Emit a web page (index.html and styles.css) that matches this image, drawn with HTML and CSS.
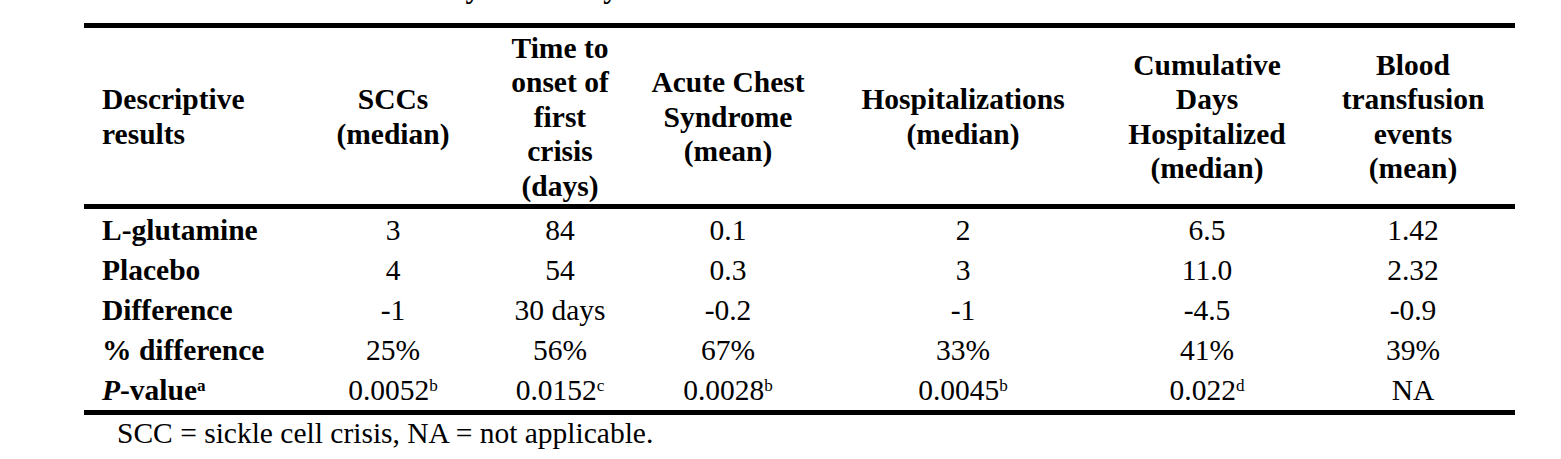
FILE: index.html
```html
<!DOCTYPE html>
<html lang="en">
<head>
<meta charset="utf-8">
<title>Efficacy results</title>
<link rel="stylesheet" href="styles.css">
</head>
<body>
<div class="title">Table 1. Clinical Efficacy Results by Treatment</div>
<table class="results">
  <colgroup>
    <col class="c1"><col class="c2"><col class="c3"><col class="c4"><col class="c5"><col class="c6"><col class="c7">
  </colgroup>
  <thead>
    <tr>
      <th class="label">Descriptive<br>results</th>
      <th>SCCs<br>(median)</th>
      <th class="tall">Time to<br>onset of<br>first<br>crisis<br>(days)</th>
      <th>Acute Chest<br>Syndrome<br>(mean)</th>
      <th>Hospitalizations<br>(median)</th>
      <th>Cumulative<br>Days<br>Hospitalized<br>(median)</th>
      <th class="last">Blood<br>transfusion<br>events<br>(mean)</th>
    </tr>
  </thead>
  <tbody>
    <tr class="first">
      <th class="label">L-glutamine</th>
      <td>3</td><td>84</td><td>0.1</td><td>2</td><td>6.5</td><td class="last">1.42</td>
    </tr>
    <tr>
      <th class="label">Placebo</th>
      <td>4</td><td>54</td><td>0.3</td><td>3</td><td>11.0</td><td class="last">2.32</td>
    </tr>
    <tr>
      <th class="label">Difference</th>
      <td>-1</td><td>30 days</td><td>-0.2</td><td>-1</td><td>-4.5</td><td class="last">-0.9</td>
    </tr>
    <tr>
      <th class="label">% difference</th>
      <td>25%</td><td>56%</td><td>67%</td><td>33%</td><td>41%</td><td class="last">39%</td>
    </tr>
    <tr class="end">
      <th class="label"><i>P</i>-value<sup>a</sup></th>
      <td>0.0052<sup>b</sup></td><td>0.0152<sup>c</sup></td><td>0.0028<sup>b</sup></td><td>0.0045<sup>b</sup></td><td>0.022<sup>d</sup></td><td class="last">NA</td>
    </tr>
  </tbody>
</table>
<p class="note">SCC = sickle cell crisis, NA = not applicable.</p>
</body>
</html>
```
FILE: styles.css
```css
html, body {
  margin: 0;
  padding: 0;
  background: #ffffff;
  color: #000000;
  font-family: "Liberation Serif", "Times New Roman", serif;
  font-size: 29.5px;
}

.title {
  margin: -29px 0 0 0;
  padding-left: 165px;
  height: 34.5px;
  line-height: 34.5px;
  font-weight: bold;
  white-space: nowrap;
}

.results {
  margin: 17.5px 0 0 84px;
  width: 1431px;
  table-layout: fixed;
  border-collapse: separate;
  border-spacing: 0;
}

.c1 { width: 230px; }
.c2 { width: 158px; }
.c3 { width: 176px; }
.c4 { width: 160px; }
.c5 { width: 310px; }
.c6 { width: 178px; }
.c7 { width: 219px; }

.results th,
.results td {
  padding: 0;
  text-align: center;
  white-space: nowrap;
}

.results thead th {
  font-weight: bold;
  line-height: 34.5px;
  vertical-align: middle;
  border-top: 5px solid #000;
  border-bottom: 5px solid #000;
  padding-top: 2.5px;
  padding-bottom: 1px;
}

.results tbody th,
.results tbody td {
  line-height: 40px;
  vertical-align: top;
}

.results tbody th {
  font-weight: bold;
}

.results .label {
  text-align: left;
  padding-left: 18px;
}

.results .last {
  padding-left: 15px;
}

.results tr.first th,
.results tr.first td {
  padding-top: 1px;
}

.results tr.end th,
.results tr.end td {
  border-bottom: 5px solid #000;
}

.results sup {
  font-size: 0.58em;
  line-height: 0;
  vertical-align: 0.55em;
}

.note {
  margin: 0;
  padding: 1px 0 0 117px;
  line-height: 34.5px;
}
```
